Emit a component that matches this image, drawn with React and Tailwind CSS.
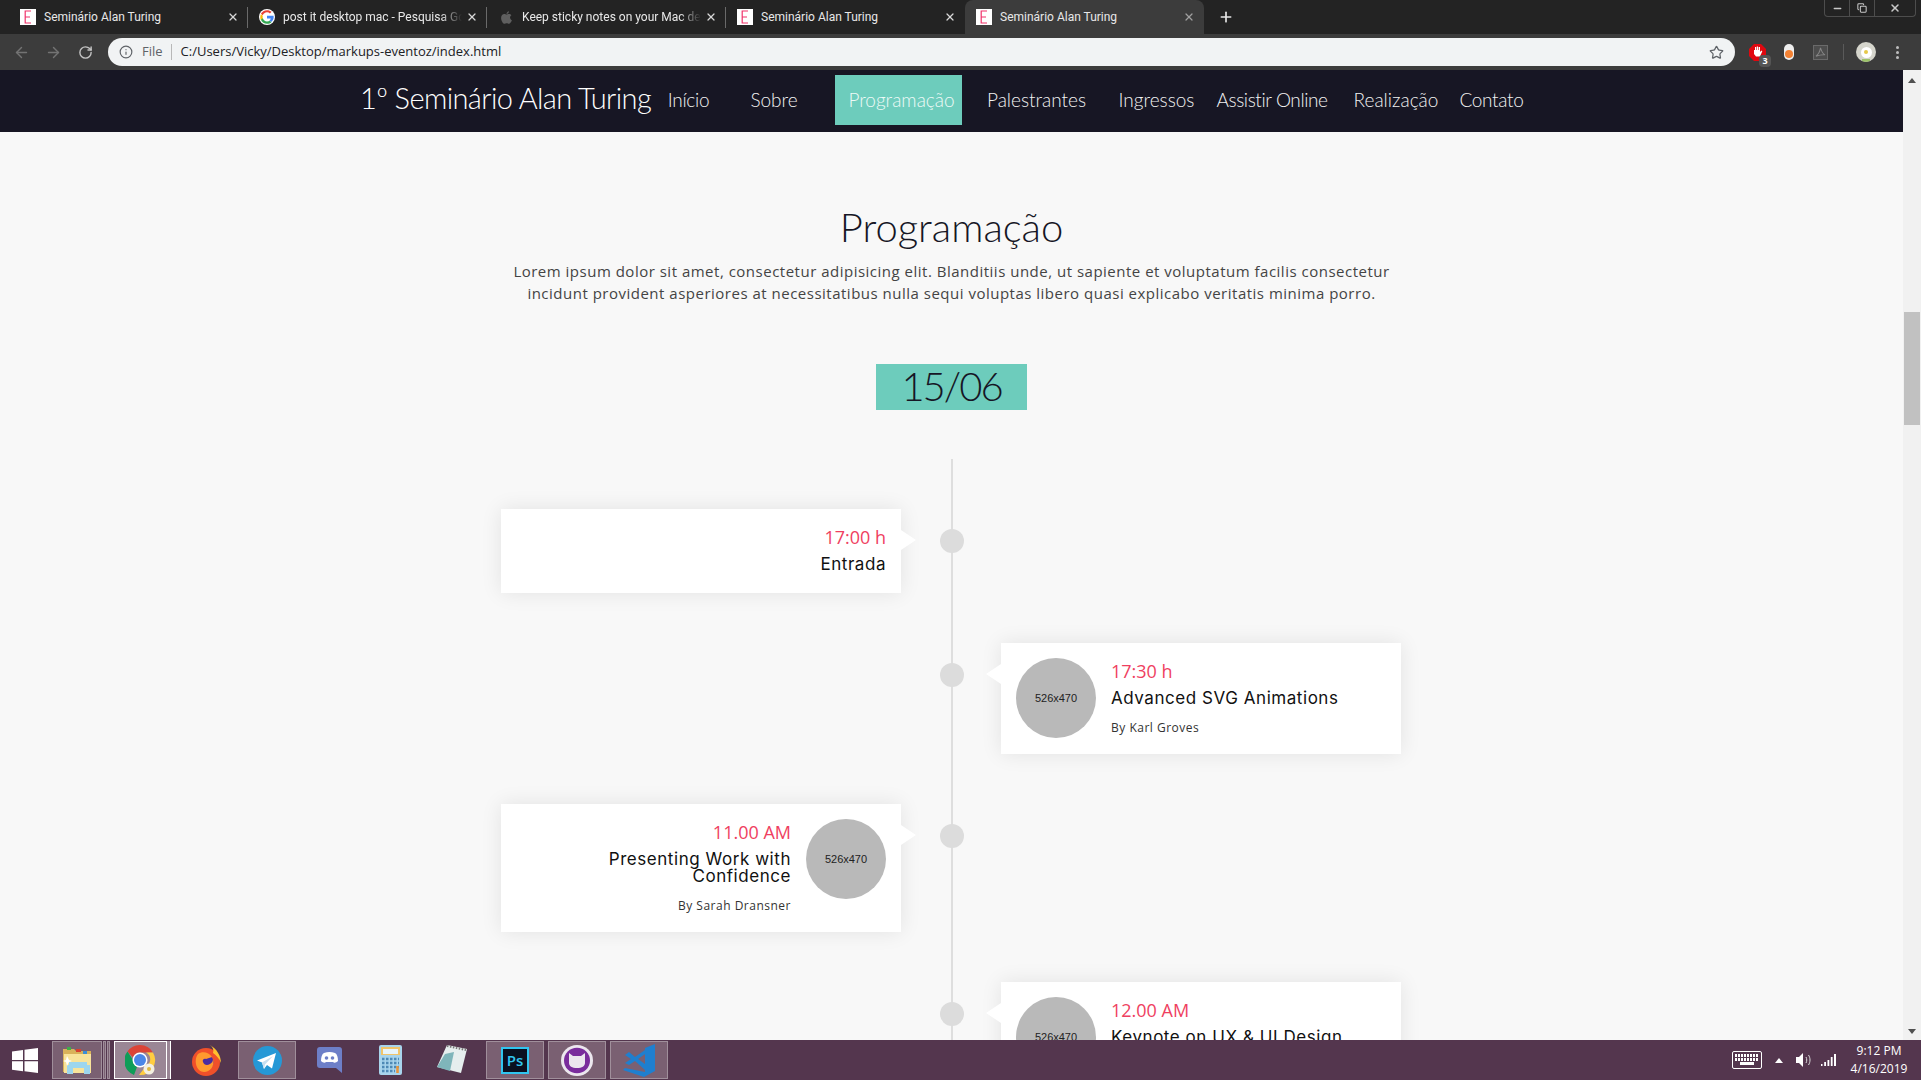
import { Info, Star, ArrowLeft, ArrowRight, RotateCw, X, Plus, Minus, Copy } from 'lucide-react';

const TABS = [
  { title: 'Seminário Alan Turing', icon: 'e', sep: true },
  { title: 'post it desktop mac - Pesquisa Google', icon: 'g', sep: true },
  { title: 'Keep sticky notes on your Mac desktop', icon: 'a', sep: true },
  { title: 'Seminário Alan Turing', icon: 'e' },
  { title: 'Seminário Alan Turing', icon: 'e', active: true },
];

const NAV = [
  { label: 'Início', cls: 'ml-[20px] w-[37px] tracking-[-0.3px]' },
  { label: 'Sobre', cls: 'ml-[44px] w-[46px]' },
  { label: 'Programação', cls: 'ml-[38px] w-[127px] h-[50px] pl-[6px] bg-[#6dccbc]', active: true },
  { label: 'Palestrantes', cls: 'ml-[25px] w-[99px]' },
  { label: 'Ingressos', cls: 'ml-[33px] w-[75px]' },
  { label: 'Assistir Online', cls: 'ml-[22px] w-[112px] tracking-[-0.4px]' },
  { label: 'Realização', cls: 'ml-[26px] w-[84px]' },
  { label: 'Contato', cls: 'ml-[23px] w-[61px] tracking-[-0.3px]' },
];

function Favicon({ type }) {
  if (type === 'e') {
    return (
      <div className="w-4 h-4 bg-white flex items-center justify-center shrink-0">
        <svg width="8" height="14" viewBox="0 0 8 14" fill="none" stroke="#f0336b" strokeWidth="1.2">
          <path d="M7 1H1.2V13H7M1.2 7H6" />
        </svg>
      </div>
    );
  }
  if (type === 'g') {
    return (
      <svg width="16" height="16" viewBox="0 0 48 48" className="shrink-0">
        <circle cx="24" cy="24" r="24" fill="#fff" />
        <path fill="#ea4335" d="M24 10c3.500 0 6.500 1.200 8.900 3.400l5-5C34.200 5.100 29.500 3.500 24 3.500 16 3.500 9.100 8 5.700 14.600l5.800 4.500C13.200 14 18.100 10 24 10z" />
        <path fill="#4285f4" d="M44 24.500c0-1.500-.1-2.900-.4-4.300H24v8.100h11.300c-.5 2.600-2 4.900-4.200 6.300l5.600 4.400C40.700 35.400 44 30.500 44 24.500z" />
        <path fill="#fbbc05" d="M11.500 28.900c-.4-1.300-.7-2.800-.7-4.400s.3-3 .7-4.400l-5.800-4.500C4.500 18.300 3.800 21.300 3.800 24.500s.7 6.200 1.900 8.900z" />
        <path fill="#34a853" d="M24 44.500c5.400 0 10-1.800 13.300-4.800l-5.600-4.400c-1.800 1.200-4.200 2-7.700 2-5.900 0-10.800-4-12.500-9.400l-5.800 4.500C9.100 40 16 44.500 24 44.500z" />
      </svg>
    );
  }
  return (
    <svg width="11" height="13" viewBox="0 0 11 13" fill="#5f5f5f" className="shrink-0 ml-[3px]">
      <path d="M8 .2C8 1.800 6.900 3 5.500 3 5.400 1.600 6.600.4 8 .2zM5.500 3.600c.6 0 1.400-.6 2.500-.6 1 0 1.900.500 2.400 1.300-2 1.200-1.700 4 .5 4.900-.6 1.500-1.700 3.600-3 3.600-.8 0-1.200-.5-2.200-.5s-1.500.5-2.300.5C1.900 12.800.1 9.600.1 7c0-2.500 1.600-4 3.200-4 1 0 1.700.6 2.200.6z" />
    </svg>
  );
}

function Tab({ tab }) {
  const long = tab.title.length > 30;
  return (
    <div className={`relative w-[239px] h-[34px] flex items-center shrink-0 pl-[11px] pr-[9px] ${tab.active ? 'bg-[#3c3c3c] rounded-t-lg' : ''}`}>
      <Favicon type={tab.icon} />
      <span className={`flex-1 overflow-hidden whitespace-nowrap text-[12px] text-[#e8e8e8] [font-family:Roboto,sans-serif] ${tab.icon === 'a' ? 'ml-[10px]' : 'ml-[8px]'} ${long ? '[mask-image:linear-gradient(to_right,black_88%,transparent)]' : ''}`}>{tab.title}</span>
      <X size={12} strokeWidth={2.5} className={`ml-1 shrink-0 ${tab.active ? 'text-[#a0a0a0]' : 'text-[#d8d8d8]'}`} />
      {tab.sep && <div className="absolute right-0 top-[7px] w-px h-[21px] bg-[#6a6a6a]" />}
    </div>
  );
}

function BrowserChrome() {
  return (
    <div className="shrink-0">
      <div className="h-[34px] bg-[#232323] flex pl-[9px] relative">
        {TABS.map((tab, i) => <Tab key={i} tab={tab} />)}
        <Plus size={16} strokeWidth={2.5} className="text-[#e8e8e8] ml-[14px] mt-[9px]" />
        <div className="absolute right-[5px] top-0 w-[92px] h-[17px] border border-t-0 border-[#4d4d4d] rounded-b flex">
          <div className="w-[25px] flex items-center justify-center border-r border-[#4d4d4d]"><Minus size={11} strokeWidth={3} className="text-[#c8c8c8]" /></div>
          <div className="w-[25px] flex items-center justify-center border-r border-[#4d4d4d]"><Copy size={10} strokeWidth={2.5} className="text-[#c8c8c8]" /></div>
          <div className="flex-1 flex items-center justify-center"><X size={12} strokeWidth={3} className="text-[#c8c8c8]" /></div>
        </div>
      </div>
      <div className="h-[36px] bg-[#3c3c3c] flex items-center">
        <ArrowLeft size={17} strokeWidth={2} className="ml-[13px] text-[#737373]" />
        <ArrowRight size={17} strokeWidth={2} className="ml-[15px] text-[#737373]" />
        <RotateCw size={15} strokeWidth={2.25} className="ml-[16px] text-[#c4c4c4]" />
        <div className="ml-[15px] w-[1627px] h-[28px] self-start mt-[4px] rounded-full bg-[#f1f3f4] flex items-center pl-[11px] pr-[11px]">
          <Info size={14} strokeWidth={2} className="text-[#5f6368]" />
          <span className="ml-[9px] text-[13px] text-[#5f6368]">File</span>
          <div className="ml-[8px] w-px h-[16px] bg-[#b8b8b8]" />
          <span className="ml-[9px] text-[13px] text-[#202124]">C:/Users/Vicky/Desktop/markups-eventoz/index.html</span>
          <Star size={15} strokeWidth={2} className="ml-auto text-[#5f6368]" />
        </div>
        <div className="relative ml-[14px] w-[17px] h-[17px]">
          <svg width="17" height="17" viewBox="0 0 17 17">
            <path fill="#e0070f" d="M5 0h7l5 5v7l-5 5H5l-5-5V5z" />
            <path fill="#fff" d="M5 6h1V3h1.200v3h.6V2.500H9V6h.6V3H11v5l1.500-1.500.8.7L11 12.500H7L5 10z" />
          </svg>
          <span className="absolute left-[10px] top-[11px] w-[12px] h-[12px] bg-[#555] rounded-sm text-white text-[9px] font-bold leading-[12px] text-center">3</span>
        </div>
        <div className="ml-[18px] w-[10px] h-4 rounded-full bg-[#eeeeee] flex items-end justify-center pb-[2px]">
          <div className="w-[8px] h-[8px] rounded-full bg-[#f58233]" />
        </div>
        <div className="ml-[19px] w-[15px] h-[15px] border border-[#6a6a6a] bg-[#4d4d4d] flex items-center justify-center">
          <svg width="11" height="11" viewBox="0 0 12 12" fill="none" stroke="#858585" strokeWidth="1.100"><path d="M6 1c-.5 3-2 7-5 9 3-1 7-2 10-1.500C8 8 7 4 6 1z" /></svg>
        </div>
        <div className="ml-[15px] w-px h-[16px] bg-[#5a5a5a]" />
        <div className="relative ml-[12px] w-5 h-5 rounded-full bg-[#d5d5cc] overflow-hidden flex items-center justify-center">
          <div className="w-[11px] h-[11px] rounded-full bg-white flex items-center justify-center">
            <div className="w-[4px] h-[4px] rounded-full bg-[#e6c84a]" />
          </div>
          <div className="absolute bottom-0 w-[8px] h-[3px] bg-[#9cc26a]" />
        </div>
        <div className="ml-[20px] flex flex-col gap-[2px]">
          <div className="w-[3px] h-[3px] rounded-full bg-[#bdbdbd]" />
          <div className="w-[3px] h-[3px] rounded-full bg-[#bdbdbd]" />
          <div className="w-[3px] h-[3px] rounded-full bg-[#bdbdbd]" />
        </div>
      </div>
    </div>
  );
}

function Avatar() {
  return (
    <div className="w-[80px] h-[80px] rounded-full bg-[#b9b9b9] shrink-0 flex items-center justify-center text-[11px] text-[#222] [font-family:'Liberation_Sans',sans-serif]">526x470</div>
  );
}

function Card({ time, title, author, side }) {
  const left = side === 'left';
  return (
    <div className={`relative w-[400px] bg-white shadow-[0_0_20px_rgba(0,0,0,0.09)] pt-[15px] px-[15px] pb-[16px] flex gap-[15px] ${left ? 'text-right' : 'ml-[500px]'}`}>
      {!left && author && <Avatar />}
      <div className={`flex-1 min-w-0 ${author ? 'pb-[2px]' : 'pb-[4px]'}`}>
        <p className="text-[18px] leading-[26px] text-[#ef3f61]">{time}</p>
        <h3 className={`mt-[6px] text-[17px] leading-[17px] tracking-[0.55px] font-normal text-[#111] [font-family:Inter,sans-serif] ${left ? 'pl-[30px]' : ''}`}>{title}</h3>
        {author && <p className="mt-[12px] text-[12px] leading-[17px] tracking-[0.5px] text-[#333]">{author}</p>}
      </div>
      {left && author && <Avatar />}
      <div className={`absolute top-[21px] w-0 h-0 border-y-[10px] border-y-transparent ${left ? '-right-[15px] border-l-[15px] border-l-white' : '-left-[15px] border-r-[15px] border-r-white'}`} />
      <div className={`absolute top-[20px] w-[24px] h-[24px] rounded-full bg-[#dcdcdc] ${left ? '-right-[63px]' : '-left-[61px]'}`} />
    </div>
  );
}

function Page() {
  return (
    <div className="flex-1 min-w-0 overflow-hidden bg-[#f8f8f8]">
      <nav className="h-[62px] bg-[#171624] flex items-center pl-[360px] text-white [font-family:Lato,sans-serif] font-light">
        <span className="text-[29px] leading-[62px] w-[290px] tracking-[-0.6px] whitespace-nowrap -mt-[6px]">1º Seminário Alan Turing</span>
        {NAV.map((item) => (
          <a key={item.label} className={`text-[19px] -mt-[2px] flex items-center justify-center whitespace-nowrap shrink-0 ${item.cls} ${item.active ? 'text-[#eefaf7]' : 'text-[#f2f2f2]'}`}>{item.label}</a>
        ))}
      </nav>
      <section className="pt-[70px] text-center">
        <h2 className="text-[40px] leading-[50px] font-light text-[#161625] [font-family:Lato,sans-serif]">Programação</h2>
        <p className="mt-[8px] mx-auto w-[900px] text-[15px] leading-[22px] tracking-[0.5px] text-[#444]">
          Lorem ipsum dolor sit amet, consectetur adipisicing elit. Blanditiis unde, ut sapiente et voluptatum facilis consectetur incidunt provident asperiores at necessitatibus nulla sequi voluptas libero quasi explicabo veritatis minima porro.
        </p>
        <div className="mt-[60px] mx-auto w-[151px] h-[46px] bg-[#6dccbc] text-[40px] leading-[44px] tracking-[-2px] font-light text-[#161625] [font-family:Lato,sans-serif]">15/06</div>
      </section>
      <section className="relative mt-[49px] ml-[501px] w-[900px] pt-[50px] flex flex-col gap-[50px] text-left">
        <div className="absolute left-[450px] top-0 bottom-0 w-[2px] bg-[#dedede]" />
        <Card side="left" time="17:00 h" title="Entrada" />
        <Card side="right" time="17:30 h" title="Advanced SVG Animations" author="By Karl Groves" />
        <Card side="left" time="11.00 AM" title="Presenting Work with Confidence" author="By Sarah Dransner" />
        <Card side="right" time="12.00 AM" title="Keynote on UX & UI Design" author="By Karl Groves" />
      </section>
    </div>
  );
}

function Scrollbar() {
  return (
    <div className="w-[18px] shrink-0 bg-[#f1f1f1] flex flex-col items-center relative">
      <div className="mt-[8px] w-0 h-0 border-x-[4px] border-x-transparent border-b-[5px] border-b-[#505050]" />
      <div className="absolute top-[242px] left-[1px] w-[16px] h-[113px] bg-[#c1c1c1]" />
      <div className="mt-auto mb-[6px] w-0 h-0 border-x-[4px] border-x-transparent border-t-[5px] border-t-[#505050]" />
    </div>
  );
}

function TaskButton({ cls, children }) {
  return <div className={`h-[38px] flex items-center justify-center shrink-0 ${cls}`}>{children}</div>;
}

function Taskbar() {
  const open = 'bg-[#7a6072] border border-[#a08f9b]';
  return (
    <div className="h-[40px] shrink-0 bg-[#54364e] flex items-center text-white">
      <svg width="26" height="25" viewBox="0 0 26 25" fill="#fff" className="ml-[12px]"><path d="M0 3.500 11 2v10H0zM12.500 1.800 26 0v12H12.500zM0 13.300h11v10L0 21.800zM12.500 13.300H26V25l-13.500-1.800z" /></svg>
      <TaskButton cls={`ml-[14px] w-[50px] ${open}`}>
        <svg width="31" height="27" viewBox="0 0 31 27">
          <path fill="#d9b25a" d="M1 2h11l2 2h15v21H1z" />
          <path fill="#3fae49" d="M5 0h4v3H5z" /><path fill="#d8402f" d="M14 2h5v3h-5z" /><path fill="#3b8fd8" d="M21 4h4v3h-4z" />
          <path fill="#f8e39a" d="M2 7h27v19H2z" />
          <path fill="#9dd6ee" d="M7 15h18v3h3v9h-6v-6H11v6H5v-9h2z" />
          <path fill="#ffffff" d="M5 9l2 4 3 1-3 1-2 4-1-4-3-1 3-1z" />
        </svg>
      </TaskButton>
      <div className={`ml-[1px] w-[3px] h-[38px] ${open}`} />
      <div className={`ml-[1px] w-[3px] h-[38px] ${open}`} />
      <TaskButton cls="ml-[4px] w-[53px] bg-[#9a8695] border border-white">
        <svg width="31" height="31" viewBox="0 0 31 31">
          <path fill="#db4437" d="M15 0a15 15 0 0 1 13 7.500H15a7.500 7.500 0 0 0-7 5L2.500 6.500A15 15 0 0 1 15 0z" />
          <path fill="#0f9d58" d="M2.500 6.500 8 15a7.500 7.500 0 0 0 4 7l-3 8A15 15 0 0 1 2.500 6.500z" />
          <path fill="#ffcd40" d="M28 7.500A15 15 0 0 1 14 30l7-9a7.500 7.500 0 0 0 0-13.500z" />
          <circle cx="15" cy="15" r="7.500" fill="#fff" />
          <circle cx="15" cy="15" r="6" fill="#4a86e8" />
          <circle cx="24" cy="24" r="5.500" fill="#f3efe0" />
          <circle cx="24" cy="24" r="2" fill="#e2b93b" />
        </svg>
      </TaskButton>
      <div className="w-[4px] h-[38px] bg-[#9a8695] border-r border-white" />
      <TaskButton cls="ml-[4px] w-[62px]">
        <svg width="30" height="31" viewBox="0 0 30 31">
          <circle cx="15" cy="17" r="14" fill="#f0502a" />
          <path fill="#ffbf2e" d="M19 0c7 4 11 11 11 18-2-5-5-8-8-10 1-3 0-6-3-8z" />
          <circle cx="15" cy="17" r="7.500" fill="#4a2ba0" />
          <path fill="#ff9a2e" d="M7 9c4-3 11-2 14 3l-6 2c-2-1-4 1-3 3 1 3 4 4 7 2 2-1 3-3 3-5 2 7-3 13-9 13C6 27 2 16 7 9z" />
        </svg>
      </TaskButton>
      <TaskButton cls={`ml-[1px] w-[58px] ${open}`}>
        <svg width="29" height="29" viewBox="0 0 29 29"><circle cx="14.500" cy="14.500" r="14.500" fill="#2598d6" /><path fill="#fff" d="M23 7 4 14.500l5 2 2 6.500 3-4 5 3.500z" /><path fill="#c7dff0" d="M9 16.500 20 10l-8 8.500-1 4.500z" /></svg>
      </TaskButton>
      <TaskButton cls="ml-[2px] w-[62px]">
        <svg width="25" height="26" viewBox="0 0 25 26"><path fill="#6d7fc8" d="M3 0h19a3 3 0 0 1 3 3v23l-6-5H3a3 3 0 0 1-3-3V3a3 3 0 0 1 3-3z" /><path fill="#fff" d="M4 14c0-4 1-7 3-8 4-1.500 7-1.500 11 0 2 1 3 4 3 8-2 2-4 2-5 1H9c-1 1-3 1-5-1z" /><circle cx="9.500" cy="11" r="1.800" fill="#6d7fc8" /><circle cx="15.500" cy="11" r="1.800" fill="#6d7fc8" /></svg>
      </TaskButton>
      <TaskButton cls="w-[61px]">
        <svg width="23" height="30" viewBox="0 0 23 30"><rect width="23" height="30" rx="2" fill="#a8d4ec" /><rect x="2" y="2" width="19" height="8" fill="#f0c46a" /><rect x="4" y="4" width="15" height="5" fill="#e8f4fa" /><path stroke="#4e89b5" strokeWidth="2.500" strokeDasharray="2.500 1.500" d="M3 14h17M3 18h17M3 22h17M3 26h13" /><path stroke="#e8943a" strokeWidth="2.500" d="M18.500 21v7" /></svg>
      </TaskButton>
      <TaskButton cls="w-[62px]">
        <svg width="30" height="30" viewBox="0 0 30 30"><path fill="#e6eeee" d="M10 0 30 4 24 28 0 22z" /><path fill="#7fb5ba" d="M8 9 17 7 13 26 0 22z" /><path stroke="#777" strokeWidth="2" strokeDasharray="1.500 1.500" d="M10 1 29 5" /></svg>
      </TaskButton>
      <TaskButton cls={`ml-[3px] w-[58px] ${open}`}>
        <div className="w-[28px] h-[27px] bg-[#0a1020] border-[2px] border-[#31c5f0] flex items-center justify-center text-[15px] font-semibold text-[#31c5f0]">Ps</div>
      </TaskButton>
      <TaskButton cls={`ml-[4px] w-[58px] ${open}`}>
        <svg width="32" height="31" viewBox="0 0 32 31"><ellipse cx="16" cy="15.500" rx="16" ry="15.500" fill="#ece7ee" /><ellipse cx="16" cy="15.500" rx="13" ry="12.800" fill="#7a2d9c" /><path fill="#ece7ee" d="M8 8l4 3h8l4-3v10c0 3-3 5-8 5s-8-2-8-5z" /></svg>
      </TaskButton>
      <TaskButton cls={`ml-[4px] w-[58px] ${open}`}>
        <svg width="32" height="33" viewBox="0 0 32 33">
          <path fill="#1f7fcf" d="M22 4 32 0v27l-11 6L0 26l2-2 20 4z" />
          <path fill="#1f7fcf" fillRule="evenodd" d="M2 11 6 8l6 5 10-7v20l-10-9-6 4-4-2 6-4zM22 10l-7 5 7 5z" />
        </svg>
      </TaskButton>
      <div className="ml-auto flex items-center">
        <div className="w-[30px] h-[18px] border border-white rounded-[2px] bg-[#54364e] flex flex-col gap-px p-[2px]">
          <div className="h-[3px] [background:repeating-linear-gradient(90deg,#fff_0_2px,transparent_2px_3px)]" />
          <div className="h-[3px] [background:repeating-linear-gradient(90deg,#fff_0_2px,transparent_2px_3px)]" />
          <div className="h-[3px] mx-[5px] bg-white" />
        </div>
        <div className="ml-[13px] w-0 h-0 border-x-[4px] border-x-transparent border-b-[5px] border-b-white" />
        <svg width="16" height="14" viewBox="0 0 16 14" fill="none" className="ml-[13px]"><path fill="#fff" d="M0 4h3l4-4v14l-4-4H0z" /><path stroke="#ddd" d="M10 4c1 2 1 4 0 6M12.500 2c2 3 2 7 0 10" /></svg>
        <svg width="15" height="12" viewBox="0 0 15 12" fill="#fff" className="ml-[9px]"><path d="M0 10h1.500v2H0zM3.200 8h1.800v4H3.200zM6.500 6h1.800v6H6.500zM9.800 3h1.800v9H9.800zM13 0h2v12h-2z" /></svg>
        <div className="ml-[13px] mr-[12px] w-[60px] text-center text-[12px] leading-[18px] text-white">
          <div>9:12 PM</div>
          <div>4/16/2019</div>
        </div>
      </div>
    </div>
  );
}

export default function App() {
  return (
    <div className="w-[1921px] h-[1080px] overflow-hidden flex flex-col [font-family:'Open_Sans',sans-serif]">
      <BrowserChrome />
      <div className="flex-1 min-h-0 flex">
        <Page />
        <Scrollbar />
      </div>
      <Taskbar />
    </div>
  );
}
